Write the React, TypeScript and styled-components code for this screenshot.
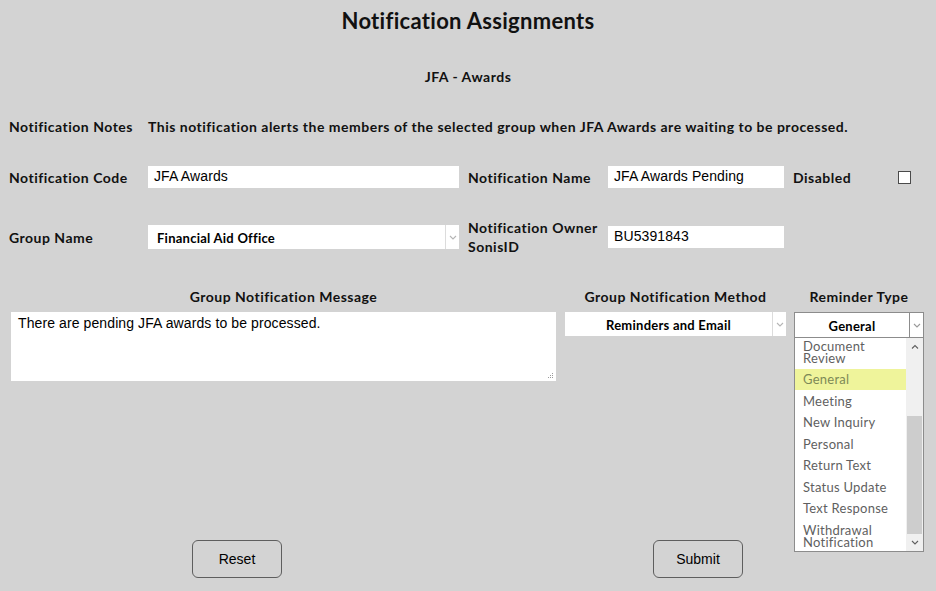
import React from 'react';
import styled, { createGlobalStyle } from 'styled-components';

const GlobalStyle = createGlobalStyle`
	html, body {
		margin: 0;
		padding: 0;
		background: #d3d3d3;
	}
	body {
		font-family: 'Lato', 'Liberation Sans', sans-serif;
		color: #111;
	}
`;

const Page = styled.div`
	position: relative;
	width: 936px;
	height: 591px;
	box-sizing: border-box;
	padding: 8px 9px 0;
	overflow: hidden;
`;

const Title = styled.h1`
	margin: 0;
	text-align: center;
	font-size: 22px;
	line-height: 26px;
	font-weight: 700;
	letter-spacing: 0.3px;
`;

const SubTitle = styled.h2`
	margin: 34px 0 0;
	text-align: center;
	font-size: 14px;
	line-height: 18px;
	font-weight: 700;
	letter-spacing: 0.5px;
`;

const NotesRow = styled.div`
	display: flex;
	margin-top: 32px;
	font-size: 14px;
	line-height: 18px;
	font-weight: 700;
	letter-spacing: 0.5px;
`;

const NotesLabel = styled.div`
	width: 139px;
	white-space: nowrap;
`;

const FormGrid = styled.div`
	display: grid;
	grid-template-columns: 139px 320px 140px 185px 105px 13px;
	grid-auto-rows: 24px;
	row-gap: 36px;
	align-items: center;
	margin-top: 29px;
`;

const Label = styled.div`
	font-size: 14px;
	line-height: 19px;
	font-weight: 700;
	letter-spacing: 0.5px;
	white-space: nowrap;
`;

const TextInput = styled.div<{ $width: number }>`
	width: ${(p) => p.$width}px;
	height: 22px;
	box-sizing: border-box;
	background: #fff;
	padding: 0 6px;
	font-family: 'Liberation Sans', Arial, sans-serif;
	font-size: 14px;
	line-height: 20px;
	letter-spacing: 0.1px;
	color: #000;
`;

const Select = styled.div<{ $width: number; $bordered?: boolean }>`
	display: flex;
	width: ${(p) => p.$width}px;
	height: ${(p) => (p.$bordered ? 26 : 24)}px;
	box-sizing: border-box;
	background: #fff;
	border: ${(p) => (p.$bordered ? '1px solid #8c8c8c' : 'none')};
	font-size: 13px;
	font-weight: 700;
	letter-spacing: 0.25px;
	color: #000;
`;

const SelectValue = styled.div<{ $center?: boolean }>`
	flex: 1;
	display: flex;
	align-items: center;
	justify-content: ${(p) => (p.$center ? 'center' : 'flex-start')};
	padding: 2px 0 0 ${(p) => (p.$center ? 0 : 9)}px;
`;

const SelectArrow = styled.div<{ $dark?: boolean }>`
	width: 13px;
	display: flex;
	align-items: center;
	justify-content: center;
	border-left: 1px solid ${(p) => (p.$dark ? '#8c8c8c' : '#dcdcdc')};
`;

const Checkbox = styled.div`
	width: 13px;
	height: 13px;
	box-sizing: border-box;
	border: 1.5px solid #4a4a4a;
	background: #fff;
`;

const Bottom = styled.div`
	display: flex;
	margin-top: 39px;
	padding-left: 2px;
`;

const Column = styled.div<{ $width: number; $gap?: number }>`
	position: relative;
	width: ${(p) => p.$width}px;
	margin-right: ${(p) => p.$gap ?? 0}px;
	display: flex;
	flex-direction: column;
`;

const ColumnHead = styled.div`
	text-align: center;
	font-size: 14px;
	line-height: 18px;
	font-weight: 700;
	letter-spacing: 0.5px;
	white-space: nowrap;
	margin-bottom: 6px;
`;

const TextArea = styled.div`
	position: relative;
	height: 69px;
	box-sizing: border-box;
	background: #fff;
	padding: 2px 7px;
	font-family: 'Liberation Sans', Arial, sans-serif;
	font-size: 14px;
	line-height: 18px;
	letter-spacing: 0.1px;
	color: #000;
`;

const Grip = styled.svg`
	position: absolute;
	right: 2px;
	bottom: 2px;
`;

const DropList = styled.div`
	position: absolute;
	top: 50px;
	left: 0;
	width: 130px;
	height: 214px;
	box-sizing: border-box;
	border: 1px solid #8c8c8c;
	border-top: none;
	background: #fff;
	display: flex;
	overflow: hidden;
`;

const Options = styled.div`
	flex: 1;
	margin-top: -3px;
`;

const Option = styled.div<{ $active?: boolean }>`
	padding: 4.75px 8px;
	font-size: 13px;
	line-height: 12px;
	letter-spacing: 0.25px;
	color: ${(p) => (p.$active ? '#7d8957' : '#5f5f5f')};
	background: ${(p) => (p.$active ? '#eff49b' : 'transparent')};
`;

const ScrollBar = styled.div`
	width: 17px;
	display: flex;
	flex-direction: column;
	background: #f0f0f0;
`;

const ScrollButton = styled.div`
	height: 17px;
	display: flex;
	align-items: center;
	justify-content: center;
`;

const ScrollTrack = styled.div`
	flex: 1;
	display: flex;
	flex-direction: column;
	justify-content: flex-end;
	padding: 0 1px;
`;

const Thumb = styled.div`
	height: 118px;
	background: #cdcdcd;
`;

const Buttons = styled.div`
	display: flex;
	gap: 371px;
	margin-top: 159px;
	padding-left: 183px;
`;

const Button = styled.button`
	width: 90px;
	height: 38px;
	box-sizing: border-box;
	border: 1px solid #5e5e5e;
	border-radius: 6px;
	background: #d3d3d3;
	font-family: 'Liberation Sans', Arial, sans-serif;
	font-size: 14px;
	color: #000;
	padding: 0;
`;

const Chevron = ({ up, color = '#b5b5b5' }: { up?: boolean; color?: string }) => (
	<svg width="8" height="5" viewBox="0 0 8 5">
		<path d={up ? 'M1 4.5 L4 1.5 L7 4.5' : 'M1 1 L4 4 L7 1'} fill="none" stroke={color} strokeWidth="1.1" />
	</svg>
);

const reminderTypes = [
	'Document Review',
	'General',
	'Meeting',
	'New Inquiry',
	'Personal',
	'Return Text',
	'Status Update',
	'Text Response',
	'Withdrawal Notification',
];

function App() {
	return (
		<Page>
			<GlobalStyle />
			<Title>Notification Assignments</Title>
			<SubTitle>JFA - Awards</SubTitle>
			<NotesRow>
				<NotesLabel>Notification Notes</NotesLabel>
				<div>This notification alerts the members of the selected group when JFA Awards are waiting to be processed.</div>
			</NotesRow>
			<FormGrid>
				<Label>Notification Code</Label>
				<TextInput $width={311}>JFA Awards</TextInput>
				<Label>Notification Name</Label>
				<TextInput $width={176}>JFA Awards Pending</TextInput>
				<Label>Disabled</Label>
				<Checkbox />

				<Label>Group Name</Label>
				<Select $width={311}>
					<SelectValue>Financial Aid Office</SelectValue>
					<SelectArrow>
						<Chevron />
					</SelectArrow>
				</Select>
				<Label>
					Notification Owner
					<br />
					SonisID
				</Label>
				<TextInput $width={176}>BU5391843</TextInput>
			</FormGrid>
			<Bottom>
				<Column $width={545} $gap={9}>
					<ColumnHead>Group Notification Message</ColumnHead>
					<TextArea>
						There are pending JFA awards to be processed.
						<Grip width="6" height="6" viewBox="0 0 6 6">
							<rect x="4" y="0" width="1" height="1" fill="#9a9a9a" />
							<rect x="2" y="2" width="1" height="1" fill="#9a9a9a" />
							<rect x="4" y="2" width="1" height="1" fill="#9a9a9a" />
							<rect x="0" y="4" width="1" height="1" fill="#9a9a9a" />
							<rect x="2" y="4" width="1" height="1" fill="#9a9a9a" />
							<rect x="4" y="4" width="1" height="1" fill="#9a9a9a" />
						</Grip>
					</TextArea>
				</Column>
				<Column $width={221} $gap={8}>
					<ColumnHead>Group Notification Method</ColumnHead>
					<Select $width={221}>
						<SelectValue $center>Reminders and Email</SelectValue>
						<SelectArrow>
							<Chevron />
						</SelectArrow>
					</Select>
				</Column>
				<Column $width={130}>
					<ColumnHead>Reminder Type</ColumnHead>
					<Select $width={130} $bordered>
						<SelectValue $center>General</SelectValue>
						<SelectArrow $dark>
							<Chevron color="#9a9a9a" />
						</SelectArrow>
					</Select>
					<DropList>
						<Options>
							{reminderTypes.map((t) => (
								<Option key={t} $active={t === 'General'}>
									{t}
								</Option>
							))}
						</Options>
						<ScrollBar>
							<ScrollButton>
								<Chevron up color="#606060" />
							</ScrollButton>
							<ScrollTrack>
								<Thumb />
							</ScrollTrack>
							<ScrollButton>
								<Chevron color="#606060" />
							</ScrollButton>
						</ScrollBar>
					</DropList>
				</Column>
			</Bottom>
			<Buttons>
				<Button>Reset</Button>
				<Button>Submit</Button>
			</Buttons>
		</Page>
	);
}

export default App;
